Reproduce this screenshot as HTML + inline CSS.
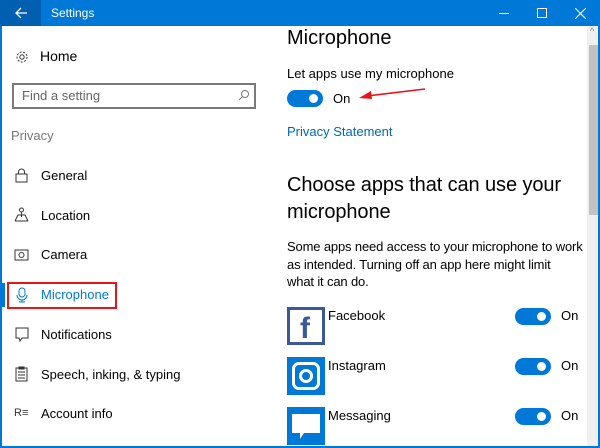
<!DOCTYPE html>
<html><head><style>
*{margin:0;padding:0;box-sizing:border-box}
body{width:600px;height:448px;overflow:hidden;background:#fff;font-family:"Liberation Sans",sans-serif;color:#000;position:relative}
.a{position:absolute;white-space:nowrap}
.t{font-size:13px;line-height:16px}
.tg{position:absolute;width:36px;height:17px;border-radius:9px;background:#0078d7}
.tg:after{content:"";position:absolute;right:5px;top:4px;width:9px;height:9px;border-radius:50%;background:#fff}
.ic{position:absolute;width:38px;height:38px;background:#0078d7}
</style></head><body>
<div class="a" style="left:0;top:0;width:600px;height:26px;background:#0078d7"></div>
<div class="a" style="left:0;top:0;width:41px;height:26px;background:#005fb0"></div>
<svg class="a" style="left:14px;top:6px" width="14" height="14" viewBox="0 0 14 14"><path d="M13 7H2M7 2L2 7l5 5" stroke="#fff" stroke-width="1.3" fill="none"/></svg>
<div class="a" style="left:51px;top:6px;font-size:12px;color:#fff">Settings</div>
<div class="a" style="left:499px;top:13px;width:10px;height:1px;background:#fff"></div>
<div class="a" style="left:537px;top:8px;width:10px;height:10px;border:1px solid #fff"></div>
<svg class="a" style="left:575px;top:8px" width="11" height="11"><path d="M0 0L11 11M11 0L0 11" stroke="#fff" stroke-width="1.1"/></svg>
<div class="a" style="left:0;top:26px;width:2px;height:422px;background:#0078d7"></div>
<div class="a" style="left:598px;top:26px;width:2px;height:422px;background:#0078d7"></div>
<div class="a" style="left:0;top:446px;width:600px;height:2px;background:#0078d7"></div>
<div class="a" style="left:587px;top:26px;width:11px;height:420px;background:#f0f0f0"></div>
<div class="a" style="left:589px;top:45px;width:9px;height:170px;background:#c2c2c2"></div>
<div class="a" style="left:590px;top:26px;font-size:9px;color:#888">^</div>

<svg class="a" style="left:15px;top:50px" width="14" height="14" viewBox="0 0 14 14"><circle cx="7" cy="7" r="2.2" fill="none" stroke="#333"/><circle cx="7" cy="7" r="5" fill="none" stroke="#333" stroke-dasharray="2 1.5"/></svg>
<div class="a" style="left:40px;top:48px;font-size:14px">Home</div>
<div class="a" style="left:12px;top:83px;width:244px;height:26px;border:2px solid #7a7a7a"></div>
<div class="a t" style="left:22px;top:88px;font-size:13px;color:#666">Find a setting</div>
<svg class="a" style="left:238px;top:89px" width="12" height="12"><circle cx="7" cy="5" r="3.5" fill="none" stroke="#777"/><path d="M4.5 7.5L1 11" stroke="#777"/></svg>
<div class="a t" style="left:11px;top:128px;color:#767676">Privacy</div>

<svg class="a" style="left:15px;top:168px" width="13" height="15"><rect x="1" y="6" width="11" height="8" fill="none" stroke="#333"/><path d="M3.5 6V4a3 3 0 016 0v2" fill="none" stroke="#333"/></svg>
<div class="a t" style="left:41px;top:168px">General</div>
<svg class="a" style="left:14px;top:207px" width="15" height="15"><circle cx="7.5" cy="3" r="2" fill="none" stroke="#333"/><path d="M7.5 5V10M1 14L4 8h7l3 6M1 14h13" fill="none" stroke="#333"/></svg>
<div class="a t" style="left:41px;top:208px">Location</div>
<svg class="a" style="left:14px;top:248px" width="15" height="13"><rect x="1" y="2" width="13" height="10" fill="none" stroke="#333"/><circle cx="7.5" cy="7" r="2.5" fill="none" stroke="#333"/></svg>
<div class="a t" style="left:41px;top:247px">Camera</div>
<div class="a" style="left:2px;top:283px;width:3px;height:24px;background:#0078d7"></div>
<div class="a" style="left:7px;top:282px;width:110px;height:27px;border:2px solid #e8141c"></div>
<svg class="a" style="left:16px;top:287px" width="12" height="16"><rect x="3" y="1" width="6" height="9" rx="3" fill="none" stroke="#0078d7"/><path d="M1 8a5 5 0 0010 0M6 13v2M3 15h6" fill="none" stroke="#0078d7"/></svg>
<div class="a t" style="left:41px;top:287px;color:#0078d7">Microphone</div>
<svg class="a" style="left:15px;top:327px" width="14" height="15"><path d="M1 1h12v10H7l-2 3-1-3H1z" fill="none" stroke="#333"/></svg>
<div class="a t" style="left:41px;top:327px">Notifications</div>
<svg class="a" style="left:15px;top:366px" width="13" height="16"><rect x="1" y="2" width="11" height="13" fill="none" stroke="#333"/><path d="M4 1h5v2H4zM3 6h7M3 9h7M3 12h7" fill="none" stroke="#333"/></svg>
<div class="a t" style="left:41px;top:367px">Speech, inking, &amp; typing</div>
<div class="a" style="left:14px;top:407px;font-size:11px;color:#333">R&#8801;</div>
<div class="a t" style="left:41px;top:406px">Account info</div>

<div class="a" style="left:287px;top:27px;font-size:20px">Microphone</div>
<div class="a t" style="left:287px;top:66px">Let apps use my microphone</div>
<div class="tg" style="left:287px;top:90px"></div>
<div class="a t" style="left:333px;top:91px">On</div>
<svg class="a" style="left:355px;top:86px" width="72" height="16"><path d="M70 3L12 10" stroke="#e8141c" stroke-width="1.5"/><path d="M4 12l12-7 1 8z" fill="#e8141c"/></svg>
<div class="a t" style="left:287px;top:124px;color:#0067b8">Privacy Statement</div>
<div class="a" style="left:287px;top:172px;font-size:20px;line-height:27px;letter-spacing:-0.1px">Choose apps that can use your<br>microphone</div>
<div class="a t" style="left:287px;top:238px;line-height:17.5px;letter-spacing:-0.15px">Some apps need access to your microphone to work<br>as intended. Turning off an app here might limit<br>what it can do.</div>

<div class="ic" style="left:287px;top:307px;background:#3b5998"></div>
<div class="a" style="left:290px;top:310px;width:32px;height:32px;background:#fff"></div>
<div class="a" style="left:300px;top:314px;font-size:30px;font-weight:bold;color:#3b5998;line-height:30px">f</div>
<div class="a t" style="left:328px;top:308px">Facebook</div>
<div class="tg" style="left:515px;top:308px"></div><div class="a t" style="left:561px;top:308px">On</div>

<div class="ic" style="left:287px;top:357px"></div>
<div class="a" style="left:292px;top:362px;width:28px;height:28px;border:3px solid #fff;border-radius:7px"></div>
<div class="a" style="left:299px;top:369px;width:14px;height:14px;border:3px solid #fff;border-radius:50%"></div>
<div class="a t" style="left:328px;top:358px">Instagram</div>
<div class="tg" style="left:515px;top:358px"></div><div class="a t" style="left:561px;top:358px">On</div>

<div class="ic" style="left:287px;top:407px"></div>
<svg class="a" style="left:290px;top:413px" width="32" height="28"><path d="M2 1h28v19H14l-4 6v-6H2z" fill="#fff"/></svg>
<div class="a t" style="left:328px;top:408px">Messaging</div>
<div class="tg" style="left:515px;top:408px"></div><div class="a t" style="left:561px;top:408px">On</div>
</body></html>
